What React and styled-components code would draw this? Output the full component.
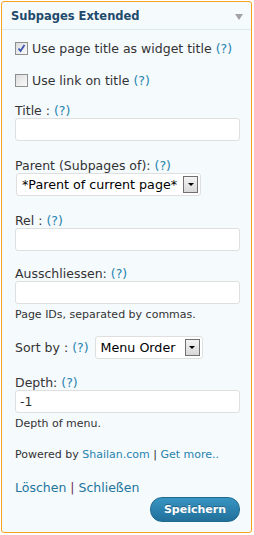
import React from "react";
import styled, { createGlobalStyle } from "styled-components";

const Global = createGlobalStyle`
  html, body {
    margin: 0;
    padding: 0;
    background: #ffffff;
  }
  body {
    font-family: "DejaVu Sans", Verdana, sans-serif;
  }
`;

const Widget = styled.div`
  margin: 1px;
  width: 251px;
  height: 532px;
  box-sizing: border-box;
  border: 1px solid #f7a21c;
  border-radius: 3px;
  background: #f5fafd;
  display: flex;
  flex-direction: column;
`;

const Header = styled.div`
  height: 27px;
  border-bottom: 1px solid #dde9f1;
  display: flex;
  align-items: center;
  justify-content: space-between;
  padding: 0 8px 0 9px;
`;

const Title = styled.h3`
  margin: 0;
  font-size: 11.5px;
  font-weight: bold;
  color: #1e4a6b;
`;

const Arrow = styled.span`
  width: 0;
  height: 0;
  border-left: 4px solid transparent;
  border-right: 4px solid transparent;
  border-top: 6px solid #a3a3a3;
  margin-top: 3px;
`;

const Body = styled.div`
  padding: 9px 11px 0 13px;
  display: flex;
  flex-direction: column;
  flex: 1;
`;

const CheckRow = styled.label`
  display: flex;
  align-items: center;
  gap: 4px;
  height: 18px;
  margin-bottom: 14px;
  font-size: 12.5px;
  color: #333;
`;

const Box = styled.span`
  width: 11px;
  height: 11px;
  border: 1px solid #8e8f8f;
  background: linear-gradient(135deg, #dcdcdc, #fbfbfb);
  display: flex;
  align-items: center;
  justify-content: center;
`;

const Help = styled.a`
  color: #2583ad;
  text-decoration: none;
  margin-left: 4px;
`;

const Field = styled.div`
  display: flex;
  flex-direction: column;
  margin-bottom: ${(p) => p.$mb || 0}px;
`;

const Label = styled.div`
  font-size: 12.5px;
  color: #333;
  height: 15px;
  line-height: 15px;
`;

const Input = styled.div`
  width: 225px;
  height: 23px;
  box-sizing: border-box;
  border: 1px solid #dfdfdf;
  border-radius: 3px;
  background: #fff;
  font-size: 12.5px;
  color: #333;
  padding: 0 4px;
  display: flex;
  align-items: center;
`;

const Select = styled.div`
  display: flex;
  align-items: center;
  justify-content: space-between;
  box-sizing: border-box;
  width: ${(p) => p.$w}px;
  height: 23px;
  margin-left: ${(p) => p.$ml || 0}px;
  border: 1px solid #dfdfdf;
  border-radius: 3px;
  background: #fff;
  font-size: 12.7px;
  color: #000;
  padding: 0 2px 0 5px;
  white-space: nowrap;
`;

const SelectBtn = styled.span`
  flex: none;
  width: 13px;
  height: 15px;
  border: 1px solid #707070;
  background: linear-gradient(#f4f4f4, #d8d8d8);
  display: flex;
  align-items: center;
  justify-content: center;
  &::after {
    content: "";
    border-left: 3px solid transparent;
    border-right: 3px solid transparent;
    border-top: 3px solid #000;
  }
`;

const Note = styled.div`
  font-size: 11px;
  line-height: 13px;
  color: #333;
  margin-top: 4px;
`;

const SortRow = styled.div`
  display: flex;
  align-items: center;
  font-size: 12.5px;
  color: #333;
  margin-bottom: 16px;
`;

const Powered = styled.div`
  font-size: 11px;
  line-height: 13px;
  color: #333;
  margin-top: 18px;
  a {
    color: #2583ad;
    text-decoration: none;
  }
`;

const Footer = styled.div`
  margin-top: 19px;
  font-size: 12.5px;
  line-height: 15px;
  color: #6a2d5d;
  a {
    color: #21759b;
    text-decoration: none;
  }
`;

const SaveRow = styled.div`
  display: flex;
  justify-content: flex-end;
  margin-top: 2px;
`;

const Save = styled.button`
  width: 90px;
  height: 25px;
  border: 1px solid #1f6a8e;
  border-radius: 12px;
  background: linear-gradient(#3894c2, #21709a);
  color: #fff;
  font-family: "DejaVu Sans", Verdana, sans-serif;
  font-size: 11px;
  font-weight: bold;
  text-shadow: 0 -1px 0 rgba(0, 0, 0, 0.3);
`;

function Check({ checked }) {
  return (
    <Box>
      {checked && (
        <svg width="9" height="9" viewBox="0 0 9 9">
          <path d="M1.5 4.5 L3.5 7 L7.5 1" fill="none" stroke="#3a55b3" strokeWidth="1.8" />
        </svg>
      )}
    </Box>
  );
}

export default function App() {
  return (
    <>
      <Global />
      <Widget>
        <Header>
          <Title>Subpages Extended</Title>
          <Arrow />
        </Header>
        <Body>
          <CheckRow>
            <Check checked />
            <span>
              Use page title as widget title<Help>(?)</Help>
            </span>
          </CheckRow>
          <CheckRow>
            <Check />
            <span>
              Use link on title<Help>(?)</Help>
            </span>
          </CheckRow>
          <Field $mb={17}>
            <Label>
              Title :<Help>(?)</Help>
            </Label>
            <Input />
          </Field>
          <Field $mb={17}>
            <Label>
              Parent (Subpages of):<Help>(?)</Help>
            </Label>
            <Select $w={185} $ml={1}>
              *Parent of current page*
              <SelectBtn />
            </Select>
          </Field>
          <Field $mb={15}>
            <Label>
              Rel :<Help>(?)</Help>
            </Label>
            <Input />
          </Field>
          <Field $mb={15}>
            <Label>
              Ausschliessen:<Help>(?)</Help>
            </Label>
            <Input />
            <Note>Page IDs, separated by commas.</Note>
          </Field>
          <SortRow>
            <span>
              Sort by :<Help>(?)</Help>
            </span>
            <Select $w={108} $ml={6}>
              Menu Order
              <SelectBtn />
            </Select>
          </SortRow>
          <Field>
            <Label>
              Depth:<Help>(?)</Help>
            </Label>
            <Input>-1</Input>
            <Note>Depth of menu.</Note>
          </Field>
          <Powered>
            Powered by <a>Shailan.com</a> | <a>Get more..</a>
          </Powered>
          <Footer>
            <a>Löschen</a> | <a>Schließen</a>
          </Footer>
          <SaveRow>
            <Save>Speichern</Save>
          </SaveRow>
        </Body>
      </Widget>
    </>
  );
}
